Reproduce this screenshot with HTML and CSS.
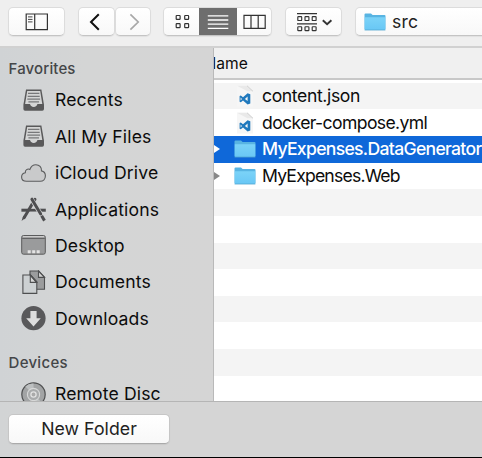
FILE: index.html
```html
<!DOCTYPE html>
<html lang="en">
<head>
<meta charset="utf-8">
<title>Open</title>
<link rel="stylesheet" href="styles.css">
</head>
<body>
<svg class="defs" width="0" height="0">
  <defs>
    <linearGradient id="blue" x1="0" y1="0" x2="0" y2="1"><stop offset="0" stop-color="#7bd3f8"/><stop offset="1" stop-color="#69c7f5"/></linearGradient>
    <symbol id="folder" viewBox="0 0 22 18">
      <path d="M.5 16V1.6Q.5.6 1.5.6H7l1.6 1.5h11.9q1 0 1 1V16q0 1-1 1h-19q-1 0-1-1z" fill="#58b4e2"/>
      <path d="M.8 4.2h20.4V16q0 .8-.8.8H1.6q-.8 0-.8-.8z" fill="url(#blue)"/>
      <path d="M.6 17.1h20.8" stroke="#55a9d3" stroke-width=".7"/>
    </symbol>
    <symbol id="code" viewBox="0 0 18 22">
      <path d="M1 .8h10.5L17 6.3v15.2H1z" fill="#f6f6f6"/>
      <path d="M1 .8h10.5L17 6.3h-5.5z" fill="#e9e9e9"/>
      <path d="M11 .8 17 6.3" stroke="#d2d2d2"/>
      <path d="M11.6 8.2 14.3 9.3v9.2l-2.7 1.1-4.6-4-2.2 1.7-1.2-.6v-5.6l1.2-.6L7 12.2zm0 3.4L8.9 13.9l2.7 2.2zM4.6 12.4v3l1.4-1.5z" fill="#2079bd" fill-rule="evenodd"/>
    </symbol>
    <symbol id="tray" viewBox="0 0 24 24">
      <path d="M4.3 1.3h15.4l2.6 15.2v4.2q0 1.7-1.7 1.7H3.4q-1.7 0-1.7-1.7v-4.2z" fill="#59595a"/>
      <path d="M5.5 2.6h13l2.1 13.2h-4.9q-.6 2.8-3.7 2.8t-3.7-2.8H3.4z" fill="#d4d5d5"/>
      <path d="M6.3 5.1h11.4M6 8h12M5.6 10.8h12.8M6.7 13.6h10.6" stroke="#77787a" stroke-width="1.2"/>
    </symbol>
  </defs>
</svg>
<div class="dialog">
  <header class="toolbar">
    <button class="btn sidebar-btn"><svg width="24" height="18" viewBox="0 0 24 18"><path d="M1.2 1h21.2v15.6H1.2zM9.7 1v15.6" fill="none" stroke="#333" stroke-width="1.2"/><path d="M3 3.9h4.5M3 6.4h4.5M3 8.9h4.5" stroke="#444"/></svg></button>
    <div class="nav">
      <button class="btn"><svg width="36" height="28" viewBox="0 0 36 28"><path d="m19.8 6.3-7.8 7.7 7.8 7.7" fill="none" stroke="#101010" stroke-width="2"/></svg></button>
      <button class="btn"><svg width="34" height="28" viewBox="0 0 34 28"><path d="m14.4 6.3 7.8 7.7-7.8 7.7" fill="none" stroke="#a8a8a8" stroke-width="1.7"/></svg></button>
    </div>
    <div class="btn views">
      <span class="view"><svg width="16" height="16" viewBox="0 0 16 16" fill="none" stroke="#333" stroke-width="1.2"><rect x="1.2" y="1.5" width="3.9" height="3.9" rx=".6"/><rect x="9.7" y="1.5" width="3.9" height="3.9" rx=".6"/><rect x="1.2" y="9.7" width="3.9" height="3.9" rx=".6"/><rect x="9.7" y="9.7" width="3.9" height="3.9" rx=".6"/></svg></span>
      <span class="view active"><svg width="22" height="16" viewBox="0 0 22 16"><path d="M.8 1.8h20.5M.8 6h20.5M.8 10.2h20.5M.8 14.4h20.5" stroke="#fff" stroke-width="1.3"/></svg></span>
      <span class="view"><svg width="24" height="16" viewBox="0 0 24 16"><path d="M1 1.4h21.2v13H1zM8 1.4v13M15.2 1.4v13" fill="none" stroke="#333" stroke-width="1.2"/></svg></span>
    </div>
    <button class="btn group"><svg width="56" height="28" viewBox="0 0 56 28" fill="none" stroke="#333" stroke-width="1.15"><path d="M11 5.6h20M11 15.9h20"/><rect x="11.8" y="8.6" width="3.9" height="3.9" rx=".6"/><rect x="19" y="8.6" width="3.9" height="3.9" rx=".6"/><rect x="26.2" y="8.6" width="3.9" height="3.9" rx=".6"/><rect x="11.8" y="18.7" width="3.9" height="3.9" rx=".6"/><rect x="19" y="18.7" width="3.9" height="3.9" rx=".6"/><rect x="26.2" y="18.7" width="3.9" height="3.9" rx=".6"/><path d="m36.8 12.2 4.3 4.1 4.3-4.1" stroke-width="1.9"/></svg></button>
    <div class="btn path"><svg width="22" height="18"><use href="#folder"/></svg><span>src</span></div>
  </header>
  <main class="body">
    <nav class="sidebar">
      <h2>Favorites</h2>
      <ul>
        <li><svg width="25" height="25" viewBox="0 0 25 25"><use href="#tray" width="24" height="24" x=".7" y=".3"/></svg><span>Recents</span></li>
        <li><svg width="25" height="25" viewBox="0 0 25 25"><use href="#tray" width="24" height="24" x=".7" y=".3"/></svg><span>All My Files</span></li>
        <li><svg width="25" height="25" viewBox="0 0 25 25"><path d="M5.5 20.3C2.5 20.3.6 18.4.6 16c0-2.3 1.5-3.9 3.7-4.3-.3-2.7 2.3-4.4 4.6-3.3C9.9 5.6 12 3.7 14.9 3.7c3.5 0 5.8 2.6 5.6 6.2 2.3.5 3.9 2.4 3.9 4.9 0 3.2-2.2 5.5-5.2 5.5z" fill="#c9cacb" stroke="#5b5c5d" stroke-width="1.1"/></svg><span>iCloud Drive</span></li>
        <li><svg width="25" height="25" viewBox="0 0 25 25"><path d="M.4 13.2h24.4" stroke="#4e4e50" stroke-width="3"/><path d="m6 14.9 5.2-9.3h2.6l5.5 9.3z" fill="#d3d4d5"/><path d="M8 13.2h9" stroke="#4e4e50" stroke-width="2.7"/><path d="M14 2.2 3.1 20.7" stroke="#4e4e50" stroke-width="3" stroke-linecap="round"/><path d="m2.4 18.8-1.9 5.3 4.4-3.6z" fill="#4e4e50"/><path d="m10.8 2.3 12.7 21" stroke="#d3d4d5" stroke-width="4.4"/><path d="m10.9 2.2 8.8 14.7" stroke="#4e4e50" stroke-width="3" stroke-linecap="round"/><path d="m20.6 18.8 2.9 4.8" stroke="#4e4e50" stroke-width="3"/></svg><span>Applications</span></li>
        <li><svg width="25" height="25" viewBox="0 0 25 25"><rect x=".7" y="2.5" width="23.6" height="18.7" rx="1.8" fill="#9a9b9c" stroke="#5a5b5c"/><path d="M1.8 3.7h21.4" stroke="#d2d2d2" stroke-width="1.2"/><path d="M1.2 5.4h22.6" stroke="#5c5d5d" stroke-width="1"/><path d="M6.7 17.2h3v3h-3zM11.2 17.2h3v3h-3zM15.7 17.2h3v3h-3z" fill="#e4e4e4"/></svg><span>Desktop</span></li>
        <li><svg width="25" height="25" viewBox="0 0 25 25" stroke="#4e4f50" stroke-width="1.1"><path d="M9 1h8.8l5.7 6.1v12.1H9z" fill="#9b9c9d"/><path d="M17.5 1v6.4h6z" fill="#d4d4d4"/><path d="M1.9 5h7.5l6.4 7.2v11.2H1.9z" fill="#ccd0d2"/><path d="M9.3 5v7.4h6.5z" fill="#d8d8d8"/><path d="m9.3 5 6.6 7.4" stroke-width="1.7"/></svg><span>Documents</span></li>
        <li><svg width="25" height="25" viewBox="0 0 25 25"><circle cx="12.5" cy="12.2" r="12.1" fill="#59595b"/><path d="M9.4 5h6.2v7.2h4.2l-7.3 8.3-7.3-8.3h4.2z" fill="#dedede"/></svg><span>Downloads</span></li>
      </ul>
      <h2 class="devices">Devices</h2>
      <ul>
        <li><svg width="25" height="25" viewBox="0 0 25 25"><circle cx="12.5" cy="12.5" r="11.7" fill="#a2a4a5" stroke="#505152" stroke-width="1.2"/><path d="M12.5 12.5 4.3 4.6A11 11 0 0 1 12.5 1.6zM12.5 12.5l8.2 7.9a11 11 0 0 1-5 2.8z" fill="#bdc0c1"/><circle cx="12.5" cy="12.5" r="6.1" fill="#a9abac" stroke="#d7d8d8" stroke-width="1.1"/><circle cx="12.5" cy="12.5" r="2.6" fill="#aaa" stroke="#e2e2e2" stroke-width="1.3"/></svg><span>Remote Disc</span></li>
      </ul>
    </nav>
    <section class="files">
      <div class="column-head"><span>Name</span></div>
      <div class="rows">
        <div class="row"><i class="arrow none"></i><svg class="doc" width="18" height="22"><use href="#code"/></svg><span class="file-json">content.json</span></div>
        <div class="row"><i class="arrow none"></i><svg class="doc" width="18" height="22"><use href="#code"/></svg><span>docker-compose.yml</span></div>
        <div class="row selected"><i class="arrow"></i><svg width="22" height="18"><use href="#folder"/></svg><span>MyExpenses.DataGenerator</span></div>
        <div class="row"><i class="arrow"></i><svg width="22" height="18"><use href="#folder"/></svg><span class="dir-web">MyExpenses.Web</span></div>
        <div class="row"></div><div class="row"></div><div class="row"></div><div class="row"></div>
        <div class="row"></div><div class="row"></div><div class="row"></div><div class="row"></div>
      </div>
    </section>
  </main>
  <footer class="footer"><button class="btn new">New Folder</button></footer>
</div>
</body>
</html>
```
FILE: styles.css
```css
* { box-sizing: border-box; }
body { margin: 0; font: 17.6px/26px Inter, "Liberation Sans", sans-serif; color: #0c0c0c; overflow: hidden; }
svg { display: block; flex: none; }
.defs { position: absolute; }
.dialog { width: 482px; height: 458px; display: flex; flex-direction: column; overflow: hidden; background: #d5d5d5; border-bottom: 1px solid #000; }
.toolbar { flex: none; height: 48px; background: #efefef; border-bottom: 2px solid #d1d1d1; display: flex; align-items: flex-start; padding: 7px 0 0 8px; }
.btn { font: inherit; color: #222; height: 29px; padding: 0; border: 1px solid #dcdcdc; border-bottom-color: #c4c4c4; border-radius: 5px; background: linear-gradient(#fff, #f8f8f8); display: flex; align-items: center; justify-content: center; flex: none; box-shadow: 0 1px 1px rgba(0, 0, 0, .06); }
.sidebar-btn { width: 57px; }
.nav { display: flex; margin-left: 13px; }
.nav .btn { width: 37px; }
.nav .btn + .btn { width: 36px; }
.views { width: 109px; margin-left: 12px; overflow: hidden; align-items: stretch; justify-content: flex-start; }
.view { width: 36px; display: flex; align-items: center; justify-content: center; }
.view:first-child { padding-left: 2px; }
.view.active { width: 38px; background: #6e6e6e; margin: -1px 0; }
.view:last-child { width: 35px; padding-left: 3px; }
.group { width: 57px; margin-left: 13px; }
.path { width: 150px; margin-left: 13px; justify-content: flex-start; padding-left: 8px; gap: 6px; }
.path span { letter-spacing: .2px; }
.body { flex: none; height: 353px; display: flex; }
.sidebar { width: 214px; flex: none; overflow: hidden; background: linear-gradient(90deg, #d0d3d5, #d4d5d5 40%, #d5d5d5); border-right: 1px solid #b9b9b9; padding-left: 8.5px; }
.sidebar h2 { margin: 8px 0 0; font-size: 15px; line-height: 26px; font-weight: 500; color: #444648; letter-spacing: .14px; }
.sidebar .devices { margin-top: 13px; letter-spacing: .3px; }
.sidebar ul { margin: 0; padding: 0 0 0 12px; list-style: none; letter-spacing: .13px; }
.sidebar li { height: 36.45px; display: flex; align-items: center; gap: 9.5px; }
li span, .row span { white-space: nowrap; }
.files { flex: 1; min-width: 0; background: #fff; overflow: hidden; }
.column-head { height: 32px; background: #f0f0f0; border-bottom: 2px solid #c8c8c8; overflow: hidden; font-size: 15.6px; line-height: 31px; }
.column-head span { display: block; margin-left: -9.5px; }
.rows { padding-top: 2.7px; }
.row { height: 26.65px; display: flex; align-items: center; letter-spacing: -.62px; }
.row:nth-child(odd) { background: #f4f4f4; }
.row .file-json { letter-spacing: -.38px; }
.row .dir-web { letter-spacing: -.8px; }
.row.selected { background: #0f68d9; color: #fff; font-weight: 500; letter-spacing: -.7px; }
.arrow { width: 0; height: 0; border: 4px solid transparent; border-left: 6px solid #888; border-right: 0; margin-right: 14px; }
.arrow.none { border-color: transparent; }
.selected .arrow { border-left-color: #fff; }
.row svg + span { margin-left: 6px; }
.row .doc { margin: 0 2px; }
.footer { flex: 1; border-top: 1px solid #b5b5b5; background: linear-gradient(90deg, #d2d4d5, #d5d5d5 25%); padding: 12px 0 0 8px; }
.new { width: 162px; height: 30px; border-color: #c6c6c6; border-bottom-color: #aaa; font-size: 17.7px; letter-spacing: .05px; }
```
